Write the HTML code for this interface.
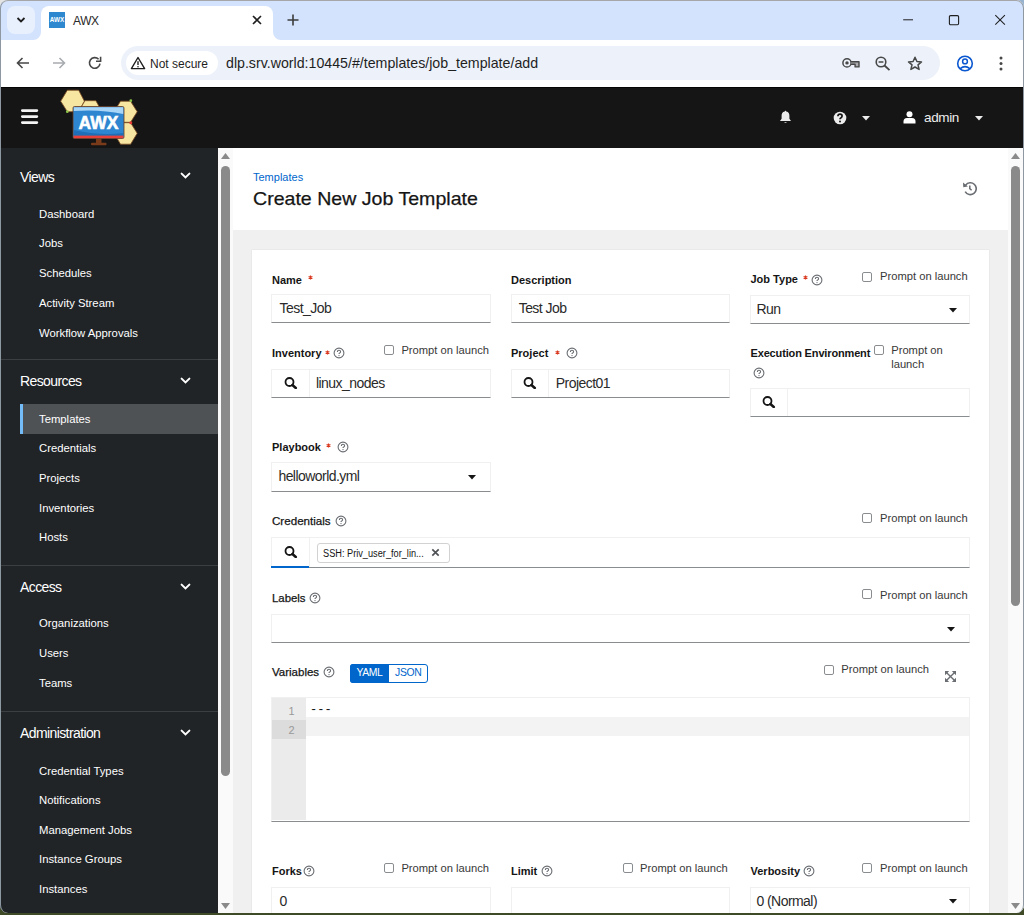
<!DOCTYPE html>
<html><head><meta charset="utf-8">
<style>
*{box-sizing:border-box;margin:0;padding:0}
html,body{width:1024px;height:915px;overflow:hidden;background:linear-gradient(#3f4b26,#3f4b26) 0 20px/100% 900px no-repeat,linear-gradient(to right,#e4e4e4,#c8ced6 50%,#95b3cf);font-family:"Liberation Sans",sans-serif}
.a{position:absolute}
#win{position:absolute;left:0;top:0;width:1024px;height:913px;background:#fff;border-radius:8px;overflow:hidden}
#frame{position:absolute;left:0;top:0;width:1024px;height:913px;border:1px solid #8d98a3;border-top-color:#a4a6a8;border-bottom:none;border-radius:8px;pointer-events:none}
.sh{position:absolute;left:20px;font-size:14.5px;color:#fff;white-space:nowrap}
.si{position:absolute;left:39px;font-size:12px;color:#fff;white-space:nowrap}
.chev{position:absolute;left:180px}
.dv{position:absolute;left:0;width:218px;height:1px;background:#3c3f42}
</style></head><body>
<div id="win">
  <!-- tab strip -->
  <div class="a" style="left:0;top:0;width:1024px;height:40px;background:#d3e3fd"></div>
  <div class="a" style="left:7px;top:6px;width:28px;height:28px;border-radius:8px;background:#e8f0fe"></div>
  <svg class="a" style="left:14px;top:14px" width="14" height="12" viewBox="0 0 14 12"><path d="M3.5 4 L7 7.5 L10.5 4" fill="none" stroke="#1f1f1f" stroke-width="1.8"/></svg>
  <div class="a" style="left:41px;top:6px;width:232px;height:34px;background:#fff;border-radius:8px 8px 0 0"></div>
  <div class="a" style="left:33px;top:32px;width:8px;height:8px;background:#fff"></div>
  <div class="a" style="left:33px;top:32px;width:8px;height:8px;background:#d3e3fd;border-radius:0 0 8px 0"></div>
  <div class="a" style="left:273px;top:32px;width:8px;height:8px;background:#fff"></div>
  <div class="a" style="left:273px;top:32px;width:8px;height:8px;background:#d3e3fd;border-radius:0 0 0 8px"></div>
  <div class="a" style="left:49px;top:12px;width:16px;height:16px;background:#2e88cf;color:#fff;font-size:6.3px;font-weight:bold;line-height:16px;text-align:center">AWX</div>
  <div class="a" style="left:73px;top:14px;font-size:12px;letter-spacing:-0.4px;color:#2a2a2a">AWX</div>
  <svg class="a" style="left:251px;top:14px" width="12" height="12" viewBox="0 0 12 12"><path d="M2 2 L10 10 M10 2 L2 10" stroke="#1f1f1f" stroke-width="1.6"/></svg>
  <svg class="a" style="left:286px;top:13px" width="14" height="14" viewBox="0 0 14 14"><path d="M7 1.5 V12.5 M1.5 7 H12.5" stroke="#3c3c3c" stroke-width="1.6"/></svg>
  <svg class="a" style="left:901px;top:12px" width="14" height="14" viewBox="0 0 14 14"><path d="M2.2 7.8 H12" stroke="#1f1f1f" stroke-width="1"/></svg>
  <svg class="a" style="left:947px;top:13px" width="14" height="14" viewBox="0 0 14 14"><rect x="2.4" y="2.6" width="9.2" height="9.2" rx="1.2" fill="none" stroke="#1f1f1f" stroke-width="1.1"/></svg>
  <svg class="a" style="left:993px;top:13px" width="14" height="14" viewBox="0 0 14 14"><path d="M2.3 2.1 L11.9 11.7 M11.9 2.1 L2.3 11.7" stroke="#1f1f1f" stroke-width="1.05"/></svg>
  <!-- toolbar -->
  <div class="a" style="left:0;top:40px;width:1024px;height:46px;background:#fff;border-radius:8px 8px 0 0"></div>
  <div class="a" style="left:41px;top:40px;width:240px;height:8px;background:#fff"></div>

  <!-- toolbar icons -->
  <svg class="a" style="left:15px;top:56px" width="16" height="14" viewBox="0 0 16 14"><path d="M14 7 H2.5 M7.5 2 L2.5 7 L7.5 12" fill="none" stroke="#474747" stroke-width="1.6"/></svg>
  <svg class="a" style="left:51px;top:56px" width="16" height="14" viewBox="0 0 16 14"><path d="M2 7 H13.5 M8.5 2 L13.5 7 L8.5 12" fill="none" stroke="#a8abaf" stroke-width="1.6"/></svg>
  <svg class="a" style="left:87px;top:56px" width="16" height="14" viewBox="0 0 16 14"><path d="M13 7.6 A5.3 5.3 0 1 1 11.6 3.3" fill="none" stroke="#474747" stroke-width="1.6"/><path d="M9 5.2 H13.6 V0.8" fill="none" stroke="#474747" stroke-width="1.6"/></svg>
  <div class="a" style="left:121px;top:46px;width:819px;height:34px;border-radius:17px;background:#edf2fa"></div>
  <div class="a" style="left:126px;top:51px;width:92px;height:24px;border-radius:12px;background:#fff"></div>
  <svg class="a" style="left:130px;top:56px" width="16" height="14" viewBox="0 0 16 14"><path d="M8 1.5 L14.6 12.6 H1.4 Z" fill="none" stroke="#1f1f1f" stroke-width="1.4" stroke-linejoin="round"/><path d="M8 5.2 V9" stroke="#1f1f1f" stroke-width="1.4"/><circle cx="8" cy="10.8" r="0.8" fill="#1f1f1f"/></svg>
  <div class="a" style="left:150px;top:57px;font-size:12px;color:#1f1f1f;white-space:nowrap">Not secure</div>
  <div class="a" style="left:226px;top:55px;font-size:14.2px;color:#1f1f1f;white-space:nowrap">dlp.srv.world:10445/#/templates/job_template/add</div>
  <svg class="a" style="left:841px;top:57px" width="20" height="13" viewBox="0 0 20 13"><circle cx="6" cy="5.9" r="4.1" fill="none" stroke="#474747" stroke-width="1.5"/><circle cx="6" cy="5.9" r="1.7" fill="#474747"/><path d="M10 4.7 H18 V9.9 H14.1 V7.2 H10" fill="#a9abae" stroke="#474747" stroke-width="1.4" stroke-linejoin="round"/></svg>
  <svg class="a" style="left:875px;top:56px" width="16" height="15" viewBox="0 0 16 15"><circle cx="6" cy="6" r="4.8" fill="none" stroke="#474747" stroke-width="1.6"/><path d="M3.6 6 H8.4" stroke="#474747" stroke-width="1.5"/><path d="M9.5 9.5 L14.5 14.2" stroke="#474747" stroke-width="1.8"/></svg>
  <svg class="a" style="left:907px;top:56px" width="16" height="15" viewBox="0 0 16 15"><path d="M8 1.3 L9.9 5.5 L14.5 5.9 L11 8.9 L12.1 13.4 L8 11 L3.9 13.4 L5 8.9 L1.5 5.9 L6.1 5.5 Z" fill="none" stroke="#474747" stroke-width="1.5" stroke-linejoin="round"/></svg>
  <svg class="a" style="left:956px;top:55px" width="18" height="17" viewBox="0 0 18 17"><circle cx="9" cy="8.5" r="7.3" fill="none" stroke="#0b57d0" stroke-width="1.6"/><circle cx="9" cy="6.4" r="2.4" fill="none" stroke="#0b57d0" stroke-width="1.5"/><path d="M4.2 13.6 Q9 9.6 13.8 13.6" fill="none" stroke="#0b57d0" stroke-width="1.5"/></svg>
  <svg class="a" style="left:997px;top:56px" width="8" height="15" viewBox="0 0 8 15"><circle cx="4" cy="2" r="1.5" fill="#474747"/><circle cx="4" cy="7.5" r="1.5" fill="#474747"/><circle cx="4" cy="13" r="1.5" fill="#474747"/></svg>
  <!-- masthead -->
  <div class="a" style="left:0;top:87px;width:1024px;height:61px;background:#151515;border-top:1px solid #050505"></div>
  <svg class="a" style="left:20px;top:109px" width="19" height="16" viewBox="0 0 19 16"><path d="M2.4 1.6 H16.8 M2.4 7.6 H16.8 M2.4 13.6 H16.8" stroke="#f4f4f4" stroke-width="2.9" stroke-linecap="round"/></svg>
  <svg class="a" style="left:55px;top:88px" width="90" height="60" viewBox="0 0 90 60">
    <g fill="#f7e6a1" stroke="#7a4a22" stroke-width="0.8">
      <path d="M5.7 13.2 L12.3 2.2 L23.7 2.2 L29.4 13.2 L23.7 23.7 L12.3 23.7 Z"/>
      <path d="M29.9 12.7 L40.9 12.7 L46 22 L40.9 31 L29.9 31 L24.5 22 Z"/>
      <path d="M65.5 13.2 L75.6 13.2 L82.2 23.7 L75.6 34.3 L65.5 34.3 L59 23.7 Z"/>
      <path d="M65.5 34.7 L75.6 34.7 L82.2 45.3 L75.6 56.2 L65.5 56.2 L59 45.3 Z"/>
    </g>
    <circle cx="12.3" cy="23.7" r="1.4" fill="#8bc34a"/>
    <circle cx="75.8" cy="12.7" r="1.4" fill="#8bc34a"/>
    <circle cx="75.8" cy="34.7" r="1.5" fill="#e53935"/>
    <rect x="41" y="50.5" width="5.5" height="5" fill="#7a3b1a"/>
    <rect x="36" y="54.8" width="15.5" height="2.4" rx="1" fill="#7a3b1a"/>
    <rect x="18" y="18.5" width="51" height="32" rx="1.5" fill="#2f86d0" stroke="#6b3a1c" stroke-width="0.8"/>
    <path d="M18.8 19.3 H68.2 V26 Q45 21 18.8 23 Z" fill="#a9d5f6"/>
    <path d="M18.8 42 Q45 48 68.2 45 V48.3 H18.8 Z" fill="#1e6fb8"/>
    <rect x="18.6" y="47.6" width="49.8" height="2.6" fill="#e8413b"/>
    <text x="43.5" y="40.8" text-anchor="middle" font-family="Liberation Sans" font-weight="bold" font-size="17.5" fill="#fff" stroke="#fff" stroke-width="0.6">AWX</text>
  </svg>
  <svg class="a" style="left:779px;top:110px" width="13" height="14" viewBox="0 0 13 14"><path d="M6.5 0.6 L7.3 1.4 C9.6 1.9 10.4 3.6 10.4 5.8 V8.8 L12 11 H1 L2.6 8.8 V5.8 C2.6 3.6 3.4 1.9 5.7 1.4 Z" fill="#ececec"/><path d="M5 12 H8 Q6.5 13.6 5 12 Z" fill="#ececec"/></svg>
  <svg class="a" style="left:832.5px;top:110.5px" width="14" height="14" viewBox="0 0 14 14"><circle cx="7" cy="7" r="6.3" fill="#ececec"/><path d="M4.9 5.3 Q4.9 3.2 7 3.2 Q9.1 3.2 9.1 5.1 Q9.1 6.3 7.8 6.9 Q7 7.3 7 8.3" fill="none" stroke="#151515" stroke-width="1.7"/><circle cx="7" cy="10.4" r="1" fill="#151515"/></svg>
  <svg class="a" style="left:860.5px;top:115px" width="10" height="6" viewBox="0 0 10 6"><path d="M1 1 H9 L5 5.5 Z" fill="#ececec"/></svg>
  <svg class="a" style="left:903px;top:111px" width="13" height="13" viewBox="0 0 13 13"><circle cx="6.5" cy="3.2" r="3" fill="#fff"/><path d="M0.5 12.5 V10.5 Q0.5 7 4 7 H9 Q12.5 7 12.5 10.5 V12.5 Z" fill="#fff"/></svg>
  <div class="a" style="left:924px;top:110px;font-size:13.5px;letter-spacing:-0.35px;color:#ededed;white-space:nowrap">admin</div>
  <svg class="a" style="left:973.5px;top:115px" width="10" height="6" viewBox="0 0 10 6"><path d="M1 1 H9 L5 5.5 Z" fill="#ececec"/></svg>

<div class="a" style="left:0px;top:148px;width:218px;height:770px;background:#212427"></div>
<div class="a" style="left:20px;top:404px;width:198px;height:30px;background:#4f5255"></div>
<div class="a" style="left:20px;top:404px;width:3px;height:30px;background:#73bcf7"></div>
<div class="a" style="left:20px;top:169.55px;font-size:14px;line-height:1;color:#fff;font-weight:400;white-space:nowrap;font-family:'Liberation Sans';letter-spacing:-0.6px;">Views</div>
<svg class="a" style="left:180px;top:172.0px" width="11" height="8" viewBox="0 0 11 8"><path d="M1.6 1.6 L5.5 5.4 L9.4 1.6" fill="none" stroke="#fff" stroke-width="2" stroke-linecap="round"/></svg>
<div class="a" style="left:39px;top:208.53px;font-size:11.3px;line-height:1;color:#fff;font-weight:400;white-space:nowrap;font-family:'Liberation Sans';">Dashboard</div>
<div class="a" style="left:39px;top:238.13px;font-size:11.3px;line-height:1;color:#fff;font-weight:400;white-space:nowrap;font-family:'Liberation Sans';">Jobs</div>
<div class="a" style="left:39px;top:268.13px;font-size:11.3px;line-height:1;color:#fff;font-weight:400;white-space:nowrap;font-family:'Liberation Sans';">Schedules</div>
<div class="a" style="left:39px;top:297.73px;font-size:11.3px;line-height:1;color:#fff;font-weight:400;white-space:nowrap;font-family:'Liberation Sans';">Activity Stream</div>
<div class="a" style="left:39px;top:327.53px;font-size:11.3px;line-height:1;color:#fff;font-weight:400;white-space:nowrap;font-family:'Liberation Sans';">Workflow Approvals</div>
<div class="a" style="left:0px;top:359px;width:218px;height:1px;background:#3c3f42"></div>
<div class="a" style="left:20px;top:374.45px;font-size:14px;line-height:1;color:#fff;font-weight:400;white-space:nowrap;font-family:'Liberation Sans';letter-spacing:-0.6px;">Resources</div>
<svg class="a" style="left:180px;top:376.9px" width="11" height="8" viewBox="0 0 11 8"><path d="M1.6 1.6 L5.5 5.4 L9.4 1.6" fill="none" stroke="#fff" stroke-width="2" stroke-linecap="round"/></svg>
<div class="a" style="left:39px;top:414.13px;font-size:11.3px;line-height:1;color:#fff;font-weight:400;white-space:nowrap;font-family:'Liberation Sans';">Templates</div>
<div class="a" style="left:39px;top:443.13px;font-size:11.3px;line-height:1;color:#fff;font-weight:400;white-space:nowrap;font-family:'Liberation Sans';">Credentials</div>
<div class="a" style="left:39px;top:472.93px;font-size:11.3px;line-height:1;color:#fff;font-weight:400;white-space:nowrap;font-family:'Liberation Sans';">Projects</div>
<div class="a" style="left:39px;top:503.03px;font-size:11.3px;line-height:1;color:#fff;font-weight:400;white-space:nowrap;font-family:'Liberation Sans';">Inventories</div>
<div class="a" style="left:39px;top:532.23px;font-size:11.3px;line-height:1;color:#fff;font-weight:400;white-space:nowrap;font-family:'Liberation Sans';">Hosts</div>
<div class="a" style="left:0px;top:565px;width:218px;height:1px;background:#3c3f42"></div>
<div class="a" style="left:20px;top:580.05px;font-size:14px;line-height:1;color:#fff;font-weight:400;white-space:nowrap;font-family:'Liberation Sans';letter-spacing:-0.6px;">Access</div>
<svg class="a" style="left:180px;top:582.5px" width="11" height="8" viewBox="0 0 11 8"><path d="M1.6 1.6 L5.5 5.4 L9.4 1.6" fill="none" stroke="#fff" stroke-width="2" stroke-linecap="round"/></svg>
<div class="a" style="left:39px;top:618.13px;font-size:11.3px;line-height:1;color:#fff;font-weight:400;white-space:nowrap;font-family:'Liberation Sans';">Organizations</div>
<div class="a" style="left:39px;top:648.13px;font-size:11.3px;line-height:1;color:#fff;font-weight:400;white-space:nowrap;font-family:'Liberation Sans';">Users</div>
<div class="a" style="left:39px;top:677.53px;font-size:11.3px;line-height:1;color:#fff;font-weight:400;white-space:nowrap;font-family:'Liberation Sans';">Teams</div>
<div class="a" style="left:0px;top:711px;width:218px;height:1px;background:#3c3f42"></div>
<div class="a" style="left:20px;top:726.35px;font-size:14px;line-height:1;color:#fff;font-weight:400;white-space:nowrap;font-family:'Liberation Sans';letter-spacing:-0.6px;">Administration</div>
<svg class="a" style="left:180px;top:728.8px" width="11" height="8" viewBox="0 0 11 8"><path d="M1.6 1.6 L5.5 5.4 L9.4 1.6" fill="none" stroke="#fff" stroke-width="2" stroke-linecap="round"/></svg>
<div class="a" style="left:39px;top:765.83px;font-size:11.3px;line-height:1;color:#fff;font-weight:400;white-space:nowrap;font-family:'Liberation Sans';">Credential Types</div>
<div class="a" style="left:39px;top:795.13px;font-size:11.3px;line-height:1;color:#fff;font-weight:400;white-space:nowrap;font-family:'Liberation Sans';">Notifications</div>
<div class="a" style="left:39px;top:824.83px;font-size:11.3px;line-height:1;color:#fff;font-weight:400;white-space:nowrap;font-family:'Liberation Sans';">Management Jobs</div>
<div class="a" style="left:39px;top:854.13px;font-size:11.3px;line-height:1;color:#fff;font-weight:400;white-space:nowrap;font-family:'Liberation Sans';">Instance Groups</div>
<div class="a" style="left:39px;top:883.53px;font-size:11.3px;line-height:1;color:#fff;font-weight:400;white-space:nowrap;font-family:'Liberation Sans';">Instances</div>
<div class="a" style="left:218px;top:148px;width:15px;height:770px;background:#fafafa"></div>
<svg class="a" style="left:220px;top:152px" width="11" height="8" viewBox="0 0 11 8"><path d="M5.5 1 L10 7 H1 Z" fill="#8a8a8a"/></svg>
<div class="a" style="left:221px;top:166px;width:9px;height:610px;background:#8a8a8a;border-radius:4.5px"></div>
<svg class="a" style="left:220px;top:902px" width="11" height="8" viewBox="0 0 11 8"><path d="M1 1 H10 L5.5 7 Z" fill="#8a8a8a"/></svg>
<div class="a" style="left:233px;top:148px;width:775px;height:82px;background:#fff"></div>
<div class="a" style="left:233px;top:230px;width:775px;height:690px;background:#f0f0f0"></div>
<div class="a" style="left:252px;top:250px;width:737px;height:670px;background:#fff;box-shadow:0 0 1px rgba(0,0,0,.18)"></div>
<div class="a" style="left:1008px;top:148px;width:16px;height:770px;background:#fafafa"></div>
<svg class="a" style="left:1010px;top:152px" width="11" height="8" viewBox="0 0 11 8"><path d="M5.5 1 L10 7 H1 Z" fill="#8a8a8a"/></svg>
<div class="a" style="left:1011px;top:166px;width:9px;height:440px;background:#8a8a8a;border-radius:4.5px"></div>
<svg class="a" style="left:1010px;top:902px" width="11" height="8" viewBox="0 0 11 8"><path d="M1 1 H10 L5.5 7 Z" fill="#8a8a8a"/></svg>
<div class="a" style="left:253px;top:171.69px;font-size:11px;line-height:1;color:#0066cc;font-weight:400;white-space:nowrap;font-family:'Liberation Sans';">Templates</div>
<div class="a" style="left:253px;top:190.24px;font-size:18.5px;line-height:1;color:#151515;font-weight:400;white-space:nowrap;font-family:'Liberation Sans';transform:scaleX(1.058);transform-origin:0 0;-webkit-text-stroke:0.25px #151515;">Create New Job Template</div>
<svg class="a" style="left:962px;top:181px" width="15" height="15" viewBox="0 0 15 15"><path d="M3.6 4.2 A5.9 5.9 0 1 1 3.2 10.6" fill="none" stroke="#6a6e73" stroke-width="1.6"/><path d="M1 1.5 L1.3 6.3 L5.9 5.5 Z" fill="#6a6e73"/><path d="M7.8 4.5 V7.6 L9.6 9.2" fill="none" stroke="#6a6e73" stroke-width="1.5"/></svg>
<div class="a" style="left:272px;top:274.89px;font-size:11px;line-height:1;color:#151515;font-weight:700;white-space:nowrap;font-family:'Liberation Sans';">Name</div>
<svg class="a" style="left:307.9px;top:274.5px" width="5" height="5" viewBox="0 0 5 5"><path d="M2.5 0.4 V4.6 M0.6 1.5 L4.4 3.5 M4.4 1.5 L0.6 3.5" stroke="#d9381e" stroke-width="1.2"/></svg>
<div class="a" style="left:271px;top:294px;width:220px;height:29px;background:#fff;border:1px solid #f0f0f0;border-bottom-color:#8a8d90"></div>
<div class="a" style="left:279.5px;top:301.05px;font-size:14px;line-height:1;color:#2a2a2a;font-weight:400;white-space:nowrap;font-family:'Liberation Sans';letter-spacing:-0.55px;">Test_Job</div>
<div class="a" style="left:511px;top:274.89px;font-size:11px;line-height:1;color:#151515;font-weight:700;white-space:nowrap;font-family:'Liberation Sans';">Description</div>
<div class="a" style="left:511px;top:294px;width:219px;height:29px;background:#fff;border:1px solid #f0f0f0;border-bottom-color:#8a8d90"></div>
<div class="a" style="left:518.7px;top:301.05px;font-size:14px;line-height:1;color:#2a2a2a;font-weight:400;white-space:nowrap;font-family:'Liberation Sans';letter-spacing:-0.55px;">Test Job</div>
<div class="a" style="left:750.5px;top:274.29px;font-size:11px;line-height:1;color:#151515;font-weight:700;white-space:nowrap;font-family:'Liberation Sans';">Job Type</div>
<svg class="a" style="left:803.0px;top:275.0px" width="5" height="5" viewBox="0 0 5 5"><path d="M2.5 0.4 V4.6 M0.6 1.5 L4.4 3.5 M4.4 1.5 L0.6 3.5" stroke="#d9381e" stroke-width="1.2"/></svg>
<svg class="a" style="left:811px;top:273.5px" width="12" height="12" viewBox="0 0 12 12"><circle cx="6" cy="6" r="4.9" fill="none" stroke="#6a6e73" stroke-width="1.1"/><path d="M4.4 4.9 Q4.4 3.3 6 3.3 Q7.6 3.3 7.6 4.7 Q7.6 5.6 6.7 6 Q6 6.3 6 7.1" fill="none" stroke="#6a6e73" stroke-width="1.1"/><circle cx="6" cy="8.6" r="0.65" fill="#6a6e73"/></svg>
<div class="a" style="left:862px;top:271.5px;width:10px;height:10px;border:1px solid #8a8d90;border-radius:2px;background:#fff"></div>
<div class="a" style="left:880px;top:270.82px;font-size:11.2px;line-height:1;color:#383838;font-weight:400;white-space:nowrap;font-family:'Liberation Sans';">Prompt on launch</div>
<div class="a" style="left:750px;top:295px;width:220px;height:29px;background:#fff;border:1px solid #f0f0f0;border-bottom-color:#8a8d90"></div>
<div class="a" style="left:756.4px;top:301.95px;font-size:14px;line-height:1;color:#2a2a2a;font-weight:400;white-space:nowrap;font-family:'Liberation Sans';letter-spacing:-0.55px;">Run</div>
<svg class="a" style="left:949px;top:308px" width="8" height="5" viewBox="0 0 8 5"><path d="M0 0 H8 L4 4.5 Z" fill="#151515"/></svg>
<div class="a" style="left:272px;top:348.29px;font-size:11px;line-height:1;color:#151515;font-weight:700;white-space:nowrap;font-family:'Liberation Sans';">Inventory</div>
<svg class="a" style="left:325.0px;top:349.5px" width="5" height="5" viewBox="0 0 5 5"><path d="M2.5 0.4 V4.6 M0.6 1.5 L4.4 3.5 M4.4 1.5 L0.6 3.5" stroke="#d9381e" stroke-width="1.2"/></svg>
<svg class="a" style="left:332.5px;top:347.2px" width="12" height="12" viewBox="0 0 12 12"><circle cx="6" cy="6" r="4.9" fill="none" stroke="#6a6e73" stroke-width="1.1"/><path d="M4.4 4.9 Q4.4 3.3 6 3.3 Q7.6 3.3 7.6 4.7 Q7.6 5.6 6.7 6 Q6 6.3 6 7.1" fill="none" stroke="#6a6e73" stroke-width="1.1"/><circle cx="6" cy="8.6" r="0.65" fill="#6a6e73"/></svg>
<div class="a" style="left:384px;top:345px;width:10px;height:10px;border:1px solid #8a8d90;border-radius:2px;background:#fff"></div>
<div class="a" style="left:401.4px;top:345.42px;font-size:11.2px;line-height:1;color:#383838;font-weight:400;white-space:nowrap;font-family:'Liberation Sans';">Prompt on launch</div>
<div class="a" style="left:271px;top:369px;width:220px;height:29px;background:#fff;border:1px solid #f0f0f0;border-bottom-color:#8a8d90"></div>
<div class="a" style="left:309px;top:369px;width:1px;height:28px;background:#f0f0f0"></div>
<svg class="a" style="left:283.5px;top:376.7px" width="14" height="12" viewBox="0 0 14 12"><circle cx="5.5" cy="5" r="4" fill="none" stroke="#151515" stroke-width="1.8"/><path d="M8.4 8 L11.8 11" stroke="#151515" stroke-width="2.5" stroke-linecap="round"/></svg>
<div class="a" style="left:316px;top:376.45px;font-size:14px;line-height:1;color:#2a2a2a;font-weight:400;white-space:nowrap;font-family:'Liberation Sans';letter-spacing:-0.55px;">linux_nodes</div>
<div class="a" style="left:511px;top:348.29px;font-size:11px;line-height:1;color:#151515;font-weight:700;white-space:nowrap;font-family:'Liberation Sans';">Project</div>
<svg class="a" style="left:555.0px;top:349.5px" width="5" height="5" viewBox="0 0 5 5"><path d="M2.5 0.4 V4.6 M0.6 1.5 L4.4 3.5 M4.4 1.5 L0.6 3.5" stroke="#d9381e" stroke-width="1.2"/></svg>
<svg class="a" style="left:565.5px;top:347.2px" width="12" height="12" viewBox="0 0 12 12"><circle cx="6" cy="6" r="4.9" fill="none" stroke="#6a6e73" stroke-width="1.1"/><path d="M4.4 4.9 Q4.4 3.3 6 3.3 Q7.6 3.3 7.6 4.7 Q7.6 5.6 6.7 6 Q6 6.3 6 7.1" fill="none" stroke="#6a6e73" stroke-width="1.1"/><circle cx="6" cy="8.6" r="0.65" fill="#6a6e73"/></svg>
<div class="a" style="left:511px;top:369px;width:219px;height:29px;background:#fff;border:1px solid #f0f0f0;border-bottom-color:#8a8d90"></div>
<div class="a" style="left:548px;top:369px;width:1px;height:28px;background:#f0f0f0"></div>
<svg class="a" style="left:522.5px;top:376.7px" width="14" height="12" viewBox="0 0 14 12"><circle cx="5.5" cy="5" r="4" fill="none" stroke="#151515" stroke-width="1.8"/><path d="M8.4 8 L11.8 11" stroke="#151515" stroke-width="2.5" stroke-linecap="round"/></svg>
<div class="a" style="left:555.8px;top:376.45px;font-size:14px;line-height:1;color:#2a2a2a;font-weight:400;white-space:nowrap;font-family:'Liberation Sans';letter-spacing:-0.55px;">Project01</div>
<div class="a" style="left:750.5px;top:348.29px;font-size:11px;line-height:1;color:#151515;font-weight:700;white-space:nowrap;font-family:'Liberation Sans';letter-spacing:-0.15px;">Execution Environment</div>
<svg class="a" style="left:752.5px;top:366.7px" width="12" height="12" viewBox="0 0 12 12"><circle cx="6" cy="6" r="4.9" fill="none" stroke="#6a6e73" stroke-width="1.1"/><path d="M4.4 4.9 Q4.4 3.3 6 3.3 Q7.6 3.3 7.6 4.7 Q7.6 5.6 6.7 6 Q6 6.3 6 7.1" fill="none" stroke="#6a6e73" stroke-width="1.1"/><circle cx="6" cy="8.6" r="0.65" fill="#6a6e73"/></svg>
<div class="a" style="left:874px;top:345px;width:10px;height:10px;border:1px solid #8a8d90;border-radius:2px;background:#fff"></div>
<div class="a" style="left:891.2px;top:345.42px;font-size:11.2px;line-height:1;color:#383838;font-weight:400;white-space:nowrap;font-family:'Liberation Sans';">Prompt on</div>
<div class="a" style="left:891.2px;top:358.72px;font-size:11.2px;line-height:1;color:#383838;font-weight:400;white-space:nowrap;font-family:'Liberation Sans';">launch</div>
<div class="a" style="left:750px;top:388px;width:220px;height:29px;background:#fff;border:1px solid #f0f0f0;border-bottom-color:#8a8d90"></div>
<div class="a" style="left:787px;top:388px;width:1px;height:28px;background:#f0f0f0"></div>
<svg class="a" style="left:761.5px;top:396.2px" width="14" height="12" viewBox="0 0 14 12"><circle cx="5.5" cy="5" r="4" fill="none" stroke="#151515" stroke-width="1.8"/><path d="M8.4 8 L11.8 11" stroke="#151515" stroke-width="2.5" stroke-linecap="round"/></svg>
<div class="a" style="left:272px;top:442.19px;font-size:11px;line-height:1;color:#151515;font-weight:700;white-space:nowrap;font-family:'Liberation Sans';">Playbook</div>
<svg class="a" style="left:326.3px;top:443.0px" width="5" height="5" viewBox="0 0 5 5"><path d="M2.5 0.4 V4.6 M0.6 1.5 L4.4 3.5 M4.4 1.5 L0.6 3.5" stroke="#d9381e" stroke-width="1.2"/></svg>
<svg class="a" style="left:336.7px;top:440.9px" width="12" height="12" viewBox="0 0 12 12"><circle cx="6" cy="6" r="4.9" fill="none" stroke="#6a6e73" stroke-width="1.1"/><path d="M4.4 4.9 Q4.4 3.3 6 3.3 Q7.6 3.3 7.6 4.7 Q7.6 5.6 6.7 6 Q6 6.3 6 7.1" fill="none" stroke="#6a6e73" stroke-width="1.1"/><circle cx="6" cy="8.6" r="0.65" fill="#6a6e73"/></svg>
<div class="a" style="left:271px;top:462px;width:220px;height:30px;background:#fff;border:1px solid #f0f0f0;border-bottom-color:#8a8d90"></div>
<div class="a" style="left:278.4px;top:469.15px;font-size:14px;line-height:1;color:#2a2a2a;font-weight:400;white-space:nowrap;font-family:'Liberation Sans';letter-spacing:-0.55px;">helloworld.yml</div>
<svg class="a" style="left:468px;top:475px" width="8" height="5" viewBox="0 0 8 5"><path d="M0 0 H8 L4 4.5 Z" fill="#151515"/></svg>
<div class="a" style="left:272px;top:515.18px;font-size:11.6px;line-height:1;color:#151515;font-weight:400;white-space:nowrap;font-family:'Liberation Sans';-webkit-text-stroke:0.25px #151515;">Credentials</div>
<svg class="a" style="left:334.6px;top:515.4px" width="12" height="12" viewBox="0 0 12 12"><circle cx="6" cy="6" r="4.9" fill="none" stroke="#6a6e73" stroke-width="1.1"/><path d="M4.4 4.9 Q4.4 3.3 6 3.3 Q7.6 3.3 7.6 4.7 Q7.6 5.6 6.7 6 Q6 6.3 6 7.1" fill="none" stroke="#6a6e73" stroke-width="1.1"/><circle cx="6" cy="8.6" r="0.65" fill="#6a6e73"/></svg>
<div class="a" style="left:862px;top:513px;width:10px;height:10px;border:1px solid #8a8d90;border-radius:2px;background:#fff"></div>
<div class="a" style="left:880px;top:513.42px;font-size:11.2px;line-height:1;color:#383838;font-weight:400;white-space:nowrap;font-family:'Liberation Sans';">Prompt on launch</div>
<div class="a" style="left:271px;top:537px;width:699px;height:31px;background:#fff;border:1px solid #f0f0f0;border-bottom-color:#8a8d90"></div>
<div class="a" style="left:309px;top:537px;width:1px;height:30px;background:#f0f0f0"></div>
<div class="a" style="left:271px;top:566px;width:38px;height:2px;background:#06c"></div>
<svg class="a" style="left:283.5px;top:546.2px" width="14" height="12" viewBox="0 0 14 12"><circle cx="5.5" cy="5" r="4" fill="none" stroke="#151515" stroke-width="1.8"/><path d="M8.4 8 L11.8 11" stroke="#151515" stroke-width="2.5" stroke-linecap="round"/></svg>
<div class="a" style="left:316.5px;top:543px;width:133px;height:19.5px;border:1px solid #d2d2d2;border-radius:3px;background:#fff"></div>
<div class="a" style="left:322.9px;top:548.53px;font-size:10px;line-height:1;color:#151515;font-weight:400;white-space:nowrap;font-family:'Liberation Sans';transform:scaleX(0.92);transform-origin:0 0;">SSH: Priv_user_for_lin...</div>
<svg class="a" style="left:431px;top:548px" width="9" height="9" viewBox="0 0 9 9"><path d="M1.3 1.3 L7.7 7.7 M7.7 1.3 L1.3 7.7" stroke="#4f5255" stroke-width="1.7"/></svg>
<div class="a" style="left:272px;top:592.75px;font-size:11.4px;line-height:1;color:#151515;font-weight:400;white-space:nowrap;font-family:'Liberation Sans';-webkit-text-stroke:0.25px #151515;">Labels</div>
<svg class="a" style="left:309.2px;top:592px" width="12" height="12" viewBox="0 0 12 12"><circle cx="6" cy="6" r="4.9" fill="none" stroke="#6a6e73" stroke-width="1.1"/><path d="M4.4 4.9 Q4.4 3.3 6 3.3 Q7.6 3.3 7.6 4.7 Q7.6 5.6 6.7 6 Q6 6.3 6 7.1" fill="none" stroke="#6a6e73" stroke-width="1.1"/><circle cx="6" cy="8.6" r="0.65" fill="#6a6e73"/></svg>
<div class="a" style="left:862px;top:589px;width:10px;height:10px;border:1px solid #8a8d90;border-radius:2px;background:#fff"></div>
<div class="a" style="left:880px;top:589.92px;font-size:11.2px;line-height:1;color:#383838;font-weight:400;white-space:nowrap;font-family:'Liberation Sans';">Prompt on launch</div>
<div class="a" style="left:271px;top:614px;width:699px;height:29px;background:#fff;border:1px solid #f0f0f0;border-bottom-color:#8a8d90"></div>
<svg class="a" style="left:946.5px;top:626.5px" width="8" height="5" viewBox="0 0 8 5"><path d="M0 0 H8 L4 4.5 Z" fill="#151515"/></svg>
<div class="a" style="left:272px;top:667.26px;font-size:11.5px;line-height:1;color:#151515;font-weight:400;white-space:nowrap;font-family:'Liberation Sans';-webkit-text-stroke:0.25px #151515;">Variables</div>
<svg class="a" style="left:322.7px;top:665.9px" width="12" height="12" viewBox="0 0 12 12"><circle cx="6" cy="6" r="4.9" fill="none" stroke="#6a6e73" stroke-width="1.1"/><path d="M4.4 4.9 Q4.4 3.3 6 3.3 Q7.6 3.3 7.6 4.7 Q7.6 5.6 6.7 6 Q6 6.3 6 7.1" fill="none" stroke="#6a6e73" stroke-width="1.1"/><circle cx="6" cy="8.6" r="0.65" fill="#6a6e73"/></svg>
<div class="a" style="left:350px;top:664px;width:78px;height:19px;border:1px solid #06c;border-radius:3px;background:#fff"></div>
<div class="a" style="left:350px;top:664px;width:39px;height:19px;background:#06c;border-radius:3px 0 0 3px"></div>
<div class="a" style="left:356.5px;top:667.89px;font-size:10.4px;line-height:1;color:#fff;font-weight:400;white-space:nowrap;font-family:'Liberation Sans';letter-spacing:-0.45px;">YAML</div>
<div class="a" style="left:395px;top:667.89px;font-size:10.4px;line-height:1;color:#06c;font-weight:400;white-space:nowrap;font-family:'Liberation Sans';letter-spacing:-0.3px;">JSON</div>
<div class="a" style="left:824px;top:664.5px;width:10px;height:10px;border:1px solid #8a8d90;border-radius:2px;background:#fff"></div>
<div class="a" style="left:841.3px;top:664.02px;font-size:11.2px;line-height:1;color:#383838;font-weight:400;white-space:nowrap;font-family:'Liberation Sans';">Prompt on launch</div>
<svg class="a" style="left:944px;top:670px" width="13" height="13" viewBox="0 0 13 13"><g fill="#6a6e73"><path d="M1 1 H5.2 L1 5.2 Z"/><path d="M12 1 V5.2 L7.8 1 Z"/><path d="M1 12 V7.8 L5.2 12 Z"/><path d="M12 12 H7.8 L12 7.8 Z"/></g><path d="M2.2 2.2 L10.8 10.8 M10.8 2.2 L2.2 10.8" stroke="#6a6e73" stroke-width="1.4"/></svg>
<div class="a" style="left:271px;top:697px;width:699px;height:125px;background:#fff;border:1px solid #f0f0f0;border-bottom:1px solid #8a8d90"></div>
<div class="a" style="left:272px;top:698px;width:34px;height:122px;background:#ebebeb"></div>
<div class="a" style="left:306px;top:717px;width:663px;height:19px;background:#f3f3f3"></div>
<div class="a" style="left:272px;top:720px;width:34px;height:19px;background:#dcdcdc"></div>
<div class="a" style="left:288.5px;top:706.09px;font-size:11px;line-height:1;color:#999;font-weight:400;white-space:nowrap;font-family:'Liberation Sans';">1</div>
<div class="a" style="left:288.5px;top:725.19px;font-size:11px;line-height:1;color:#999;font-weight:400;white-space:nowrap;font-family:'Liberation Sans';">2</div>
<div class="a" style="left:310px;top:703.74px;font-size:12px;line-height:1;color:#151515;font-weight:400;white-space:nowrap;font-family:'Liberation Mono';letter-spacing:0px;">---</div>
<div class="a" style="left:272px;top:866.19px;font-size:11px;line-height:1;color:#151515;font-weight:700;white-space:nowrap;font-family:'Liberation Sans';">Forks</div>
<svg class="a" style="left:302.7px;top:865.1px" width="12" height="12" viewBox="0 0 12 12"><circle cx="6" cy="6" r="4.9" fill="none" stroke="#6a6e73" stroke-width="1.1"/><path d="M4.4 4.9 Q4.4 3.3 6 3.3 Q7.6 3.3 7.6 4.7 Q7.6 5.6 6.7 6 Q6 6.3 6 7.1" fill="none" stroke="#6a6e73" stroke-width="1.1"/><circle cx="6" cy="8.6" r="0.65" fill="#6a6e73"/></svg>
<div class="a" style="left:384px;top:863px;width:10px;height:10px;border:1px solid #8a8d90;border-radius:2px;background:#fff"></div>
<div class="a" style="left:401.4px;top:863.02px;font-size:11.2px;line-height:1;color:#383838;font-weight:400;white-space:nowrap;font-family:'Liberation Sans';">Prompt on launch</div>
<div class="a" style="left:271px;top:887px;width:220px;height:40px;background:#fff;border:1px solid #f0f0f0;border-bottom-color:#8a8d90"></div>
<div class="a" style="left:279.5px;top:893.55px;font-size:14px;line-height:1;color:#2a2a2a;font-weight:400;white-space:nowrap;font-family:'Liberation Sans';letter-spacing:-0.55px;">0</div>
<div class="a" style="left:511px;top:866.19px;font-size:11px;line-height:1;color:#151515;font-weight:700;white-space:nowrap;font-family:'Liberation Sans';">Limit</div>
<svg class="a" style="left:540.8px;top:865.1px" width="12" height="12" viewBox="0 0 12 12"><circle cx="6" cy="6" r="4.9" fill="none" stroke="#6a6e73" stroke-width="1.1"/><path d="M4.4 4.9 Q4.4 3.3 6 3.3 Q7.6 3.3 7.6 4.7 Q7.6 5.6 6.7 6 Q6 6.3 6 7.1" fill="none" stroke="#6a6e73" stroke-width="1.1"/><circle cx="6" cy="8.6" r="0.65" fill="#6a6e73"/></svg>
<div class="a" style="left:623px;top:863px;width:10px;height:10px;border:1px solid #8a8d90;border-radius:2px;background:#fff"></div>
<div class="a" style="left:640.1px;top:863.02px;font-size:11.2px;line-height:1;color:#383838;font-weight:400;white-space:nowrap;font-family:'Liberation Sans';">Prompt on launch</div>
<div class="a" style="left:511px;top:887px;width:219px;height:40px;background:#fff;border:1px solid #f0f0f0;border-bottom-color:#8a8d90"></div>
<div class="a" style="left:750.5px;top:866.19px;font-size:11px;line-height:1;color:#151515;font-weight:700;white-space:nowrap;font-family:'Liberation Sans';">Verbosity</div>
<svg class="a" style="left:802.5px;top:865.1px" width="12" height="12" viewBox="0 0 12 12"><circle cx="6" cy="6" r="4.9" fill="none" stroke="#6a6e73" stroke-width="1.1"/><path d="M4.4 4.9 Q4.4 3.3 6 3.3 Q7.6 3.3 7.6 4.7 Q7.6 5.6 6.7 6 Q6 6.3 6 7.1" fill="none" stroke="#6a6e73" stroke-width="1.1"/><circle cx="6" cy="8.6" r="0.65" fill="#6a6e73"/></svg>
<div class="a" style="left:862px;top:863px;width:10px;height:10px;border:1px solid #8a8d90;border-radius:2px;background:#fff"></div>
<div class="a" style="left:880px;top:863.02px;font-size:11.2px;line-height:1;color:#383838;font-weight:400;white-space:nowrap;font-family:'Liberation Sans';">Prompt on launch</div>
<div class="a" style="left:750px;top:887px;width:220px;height:40px;background:#fff;border:1px solid #f0f0f0;border-bottom-color:#8a8d90"></div>
<div class="a" style="left:756.4px;top:893.85px;font-size:14px;line-height:1;color:#2a2a2a;font-weight:400;white-space:nowrap;font-family:'Liberation Sans';letter-spacing:-0.55px;">0 (Normal)</div>
<svg class="a" style="left:949px;top:899px" width="8" height="5" viewBox="0 0 8 5"><path d="M0 0 H8 L4 4.5 Z" fill="#151515"/></svg>
</div>
<div id="frame"></div>
</body></html>
